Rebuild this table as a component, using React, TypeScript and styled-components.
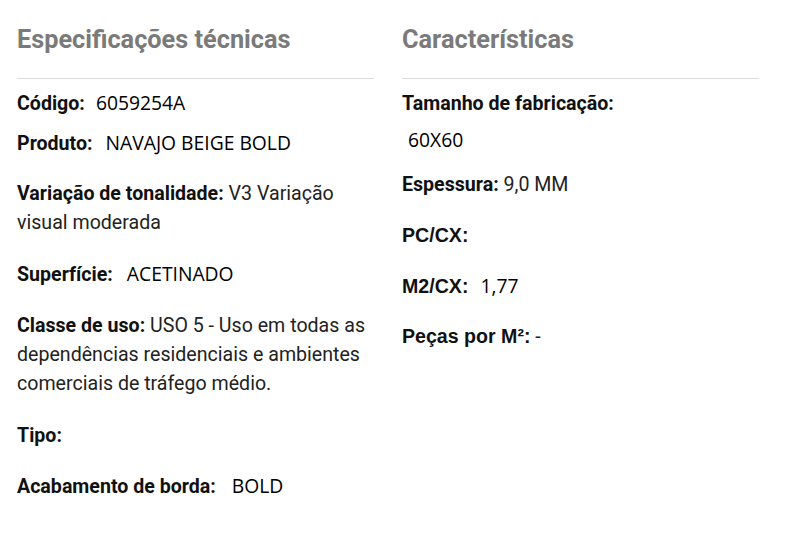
import styled, { createGlobalStyle } from 'styled-components'

const GlobalStyle = createGlobalStyle`
    body {
        margin: 0;
        background: #fff;
        font-family: Roboto, 'Liberation Sans', sans-serif;
    }
`

const Page = styled.div`
    display: grid;
    grid-template-columns: 357px 357px;
    column-gap: 28px;
    padding: 22px 17px 0;
`

const Column = styled.section`
    display: flex;
    flex-direction: column;
`

const Heading = styled.h2`
    margin: 0;
    padding-bottom: 20px;
    border-bottom: 1px solid #dcdcdc;
    font-family: Roboto, sans-serif;
    font-size: 25.3px;
    font-weight: 700;
    line-height: 36px;
    color: #7a7a7a;
`

const Row = styled.p<{ top: number }>`
    margin: ${props => props.top}px 0 0;
    font-family: Roboto, sans-serif;
    font-size: 19.6px;
    line-height: 29px;
    color: #222;
`

const Label = styled.strong<{ arial?: boolean }>`
    font-weight: 700;
    color: #111;
    font-family: ${props => props.arial ? "'Liberation Sans', Arial" : 'Roboto'}, sans-serif;
`

const Value = styled.span<{ gap: number }>`
    margin-left: ${props => props.gap}px;
    font-family: 'Open Sans', sans-serif;
    font-size: 19.3px;
    line-height: 1;
    color: #000;
`

export default function App() {
    return (
        <>
            <GlobalStyle />
            <Page>
                <Column>
                    <Heading>Especificações técnicas</Heading>
                    <Row top={10}><Label>Código:</Label><Value gap={11}>6059254A</Value></Row>
                    <Row top={11}><Label>Produto:</Label><Value gap={13}>NAVAJO BEIGE BOLD</Value></Row>
                    <Row top={21}><Label>Variação de tonalidade:</Label> V3 Variação visual moderada</Row>
                    <Row top={23}><Label>Superfície:</Label><Value gap={14}>ACETINADO</Value></Row>
                    <Row top={22}><Label>Classe de uso:</Label> USO 5 - Uso em todas as dependências residenciais e ambientes comerciais de tráfego médio.</Row>
                    <Row top={23}><Label>Tipo:</Label></Row>
                    <Row top={22}><Label>Acabamento de borda:</Label><Value gap={16}>BOLD</Value></Row>
                </Column>
                <Column>
                    <Heading>Características</Heading>
                    <Row top={10}><Label>Tamanho de fabricação:</Label></Row>
                    <Row top={8}><Value gap={6}>60X60</Value></Row>
                    <Row top={15}><Label>Espessura:</Label> 9,0 MM</Row>
                    <Row top={22}><Label arial>PC/CX:</Label></Row>
                    <Row top={22}><Label arial>M2/CX:</Label><Value gap={12}>1,77</Value></Row>
                    <Row top={21}><Label arial>Peças por M²:</Label> -</Row>
                </Column>
            </Page>
        </>
    )
}
